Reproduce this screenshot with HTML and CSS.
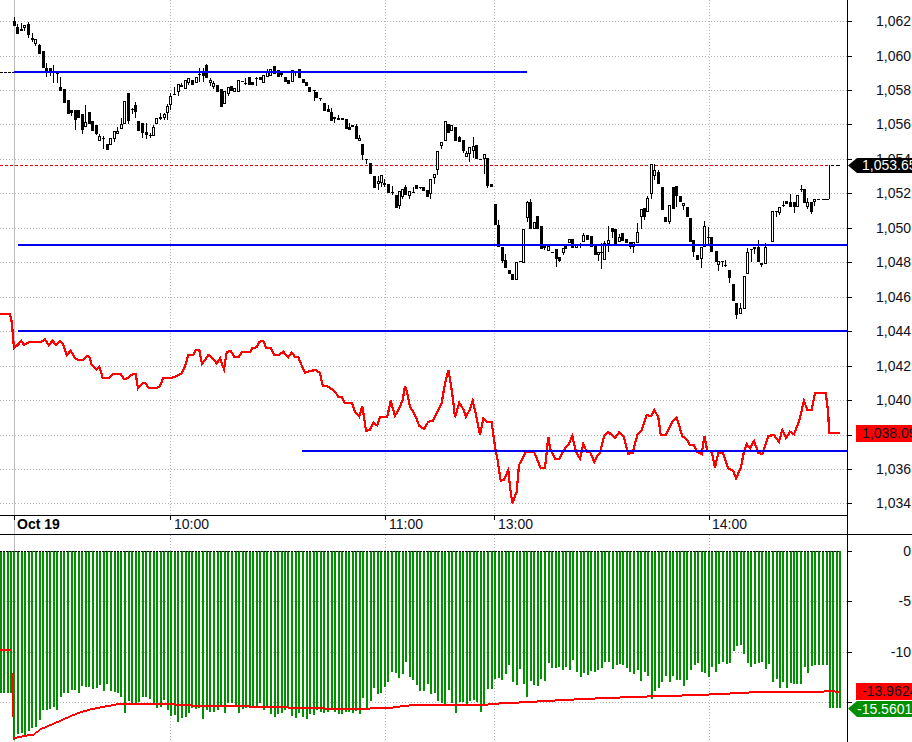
FILE: index.html
```html
<!DOCTYPE html>
<html lang="en">
<head>
<meta charset="utf-8">
<title>Oct 19 intraday chart</title>
<link rel="stylesheet" href="styles.css">
</head>
<body>
<svg class="chart" width="912" height="742" viewBox="0 0 912 742">
  <path id="grid" class="grid"></path>
  <line class="session" x1="14.5" y1="0" x2="14.5" y2="742"></line>
  <path id="lastDash" class="last-dash" d="M0 165.5H830"></path>
  <path class="black-dash" d="M0 72.5H14"></path>
  <path id="wicks" class="ink"></path>
  <path id="bodies" class="body-fill"></path>
  <path id="hollows" class="body-hollow"></path>
  <path class="ink" d="M829.5 165V199M817 199.5H820M822 199.5H829M831 165.5H834M836 165.5H840"></path>
  <polyline id="priceLine" class="red-line"></polyline>
  <path class="blue-line" d="M14 72H527M18 245H847M18 331H847M302 451H847"></path>
  <path id="bars" class="bars"></path>
  <path class="zero-line" d="M0 551.5H840"></path>
  <path class="red-dash" d="M0 650H11"></path>
  <path id="avgLine" class="red-fill"></path>

  <path class="frame" d="M0 515.5H847.5M0 534.5H912M847.5 0V742"></path>
  <path id="ticks" class="frame"></path>

  <g class="labels">
    <text class="date" x="17" y="529">Oct 19</text>
    <text x="174" y="529">10:00</text>
    <text x="389" y="529">11:00</text>
    <text x="498" y="529">13:00</text>
    <text x="712" y="529">14:00</text>
  </g>
  <g class="labels axis">
    <text x="911" y="26">1,062</text>
    <text x="911" y="61">1,060</text>
    <text x="911" y="95">1,058</text>
    <text x="911" y="129">1,056</text>
    <text x="911" y="164">1,054</text>
    <text x="911" y="198">1,052</text>
    <text x="911" y="233">1,050</text>
    <text x="911" y="267">1,048</text>
    <text x="911" y="302">1,046</text>
    <text x="911" y="336">1,044</text>
    <text x="911" y="371">1,042</text>
    <text x="911" y="405">1,040</text>
    <text x="911" y="474">1,036</text>
    <text x="911" y="508">1,034</text>
    <text x="911" y="556">0</text>
    <text x="911" y="606">-5</text>
    <text x="911" y="657">-10</text>
  </g>
  <polygon class="flag-black" points="848,165.5 857,158 912,158 912,173 857,173"></polygon>
  <rect class="flag-red" x="856" y="425" width="56" height="17"></rect>
  <rect class="flag-red" x="856" y="683" width="56" height="17"></rect>
  <polygon class="flag-green" points="848,708.5 857,701 912,701 912,717 857,717"></polygon>
  <g class="labels">
    <text class="on-dark" x="862" y="170">1,053.65</text>
    <text x="862" y="438">1,038.09</text>
    <text x="862" y="696">-13.9624</text>
    <text class="on-dark" x="857" y="714">-15.5601</text>
  </g>
</svg>
<script src="chart.js"></script>
</body>
</html>
```
FILE: styles.css
```css
html, body {
  margin: 0;
  padding: 0;
  background: #fff;
  overflow: hidden;
}
.chart {
  display: block;
  background: #fff;
}
.grid {
  fill: none;
  stroke: #b4b4b4;
  stroke-width: 1;
  stroke-dasharray: 1 2;
  shape-rendering: crispEdges;
}
.session {
  stroke: #bdbdbd;
  stroke-width: 1;
  shape-rendering: crispEdges;
}
.last-dash {
  fill: none;
  stroke: #e00010;
  stroke-width: 1;
  stroke-dasharray: 3 2;
  shape-rendering: crispEdges;
}
.black-dash {
  fill: none;
  stroke: #000;
  stroke-width: 1;
  stroke-dasharray: 3 1;
  shape-rendering: crispEdges;
}
.ink {
  fill: none;
  stroke: #000;
  stroke-width: 1;
  shape-rendering: crispEdges;
}
.body-fill {
  fill: #000;
  shape-rendering: crispEdges;
}
.body-hollow {
  fill: #fff;
  shape-rendering: crispEdges;
}
.red-line {
  fill: none;
  stroke: #ff0000;
  stroke-width: 2.2;
  stroke-linejoin: miter;
  shape-rendering: crispEdges;
}
.red-fill {
  fill: #ff0000;
  shape-rendering: crispEdges;
}
.red-dash {
  fill: none;
  stroke: #ff0000;
  stroke-width: 2;
  stroke-dasharray: 3 1;
  shape-rendering: crispEdges;
}
.blue-line {
  fill: none;
  stroke: #0000f0;
  stroke-width: 2;
  shape-rendering: crispEdges;
}
.bars {
  fill: #009000;
  shape-rendering: crispEdges;
}
.zero-line {
  fill: none;
  stroke: #000;
  stroke-width: 1;
  stroke-dasharray: 2 1;
  shape-rendering: crispEdges;
}
.frame {
  fill: none;
  stroke: #000;
  stroke-width: 1;
  shape-rendering: crispEdges;
}
.labels text {
  font-family: "Liberation Sans", Arial, sans-serif;
  font-size: 14px;
  fill: #101020;
}
.labels .date {
  font-weight: 700;
  fill: #000;
}
.axis text {
  text-anchor: end;
}
.labels .on-dark {
  fill: #fff;
}
.flag-black {
  fill: #000;
}
.flag-red {
  fill: #ff0000;
}
.flag-green {
  fill: #008f00;
}
```
FILE: chart.js
```js
// Candles: [x, bodyTop, bodyBottom, filled, high, low], measured at 3x from the window origin given per block.
var candleBlocks = [
  { ox: 0, oy: 0, rows: [
    [43,63,77,1,52,77],[52,81,102,1,72,102],[63,88,92,1,70,92],[73,76,83,0,76,92],[85,72,105,1,65,115],
    [97,115,120,1,100,125],[106,118,132,0,118,138],[118,135,161,1,132,161],[128,153,203,1,153,203],
    [139,204,212,1,190,230],[149,204,215,1,204,228],[160,217,220,1,195,248],[170,218,220,1,218,250],
    [181,262,272,1,232,272],[193,268,308,1,268,308],[203,300,342,1,300,342],[214,330,338,1,330,348],
    [224,330,360,1,330,390],[235,330,353,1,330,353],[245,343,390,1,343,402],[256,367,380,0,315,380],
    [266,337,372,1,337,372],[277,363,392,1,363,392],[289,375,402,1,375,406],[298,408,422,0,403,422],
    [310,413,415,1,408,448],[320,432,450,1,432,450],[331,413,434,0,413,434],[341,393,416,0,393,425],
    [352,393,401,0,382,401],[362,372,387,0,355,387],[373,303,373,0,303,373],[385,280,362,1,280,372],
    [395,327,329,1,323,342],[406,314,335,1,305,355],[415,363,392,1,363,392],[427,370,398,1,370,415],
    [437,396,405,1,368,416],[449,404,407,1,400,413],[460,382,407,0,376,407],[469,355,372,0,355,372],
    [480,352,356,1,340,360],[491,343,354,0,338,360],[502,319,339,0,312,360],[511,289,315,0,280,330],
    [522,282,285,1,262,285],[533,253,275,0,253,287],[544,255,260,1,250,260],[556,241,267,0,241,267],
    [565,235,248,0,235,255],[577,241,255,1,241,255],[587,232,250,0,232,250],[598,222,225,1,205,245],
    [608,218,228,1,205,245],[619,195,235,1,192,235],[629,240,250,0,235,258],[640,249,262,0,243,268],
    [652,255,275,1,255,275],[662,267,320,1,267,320],[673,273,311,0,273,311],[683,262,283,0,262,288],
    [694,258,272,1,258,272],[703,263,275,0,263,275],[715,240,275,0,240,275],[725,243,246,1,243,246],
    [736,249,252,1,235,255],[747,232,254,1,232,254],[757,246,255,1,246,255],[768,233,236,1,232,257],
    [779,231,241,1,231,241],[790,225,250,0,225,250],[800,215,232,0,208,232],[811,208,227,0,208,227],
    [823,198,222,1,198,222],[833,211,231,1,211,231],[844,218,226,0,218,232],[854,232,245,1,232,245],
    [865,241,251,1,241,251],[875,211,245,0,211,245],[886,212,215,1,212,228],[896,208,233,1,208,233]
  ]},
  { ox: 285, oy: 60, rows: [
    [53,57,68,1,57,68],[64,67,78,1,67,78],[73,80,97,1,80,97],[86,90,94,1,90,122],[94,97,113,1,97,113],[106,113,116,1,113,122]
  ]},
  { ox: 300, oy: 100, rows: [
    [72,10,33,1,10,33],[83,27,36,1,15,36],[92,37,62,1,25,62],[103,52,56,1,52,68],[115,55,59,1,45,59],
    [125,55,59,1,55,59],[137,57,86,1,57,86],[146,82,90,1,70,90],[157,75,80,1,75,80],[167,77,117,1,72,117],
    [178,114,122,0,105,122],[187,132,165,1,132,180],[199,178,180,1,178,192],[211,190,222,1,190,222],
    [221,228,264,1,228,264],[233,244,252,0,228,270],[242,225,248,0,225,260],[253,250,255,1,237,262],
    [263,252,279,1,252,279],[275,277,279,1,258,285],[287,285,324,1,285,324],[296,273,318,0,273,327],
    [307,268,291,0,268,296],[316,262,285,1,256,285],[328,274,288,0,274,297],[338,276,279,1,262,280],
    [349,256,266,1,256,266],[359,261,264,1,261,268],[370,261,272,1,261,272],[382,270,291,1,270,291],
    [391,238,282,0,238,297],[403,223,233,0,223,252],[412,154,209,0,154,225],[424,126,138,0,126,147],
    [434,64,124,0,64,124],[445,72,98,1,72,98],[454,76,93,0,76,93],[466,82,122,1,82,122],
    [478,112,127,1,107,127],[488,121,153,1,121,158],[499,160,172,0,153,172],[508,142,161,0,142,185],
    [520,139,153,0,112,173],[529,135,178,1,135,178],[541,176,181,0,176,181],[551,163,177,0,163,222],
    [562,175,259,1,175,264],[574,253,260,1,253,260],[584,313,374,1,313,374],[595,375,441,1,360,441],
    [605,442,484,1,442,488],[616,480,503,1,462,503],[626,511,522,1,511,522],[637,522,541,1,522,541],
    [649,487,539,0,487,539],[660,483,487,1,483,487],[670,388,490,0,388,490],[680,306,355,0,302,365],
    [691,306,388,1,297,388],[701,367,388,0,367,388],[712,349,388,1,349,388],[722,379,446,1,379,446],
    [733,438,444,1,438,450],[744,437,452,0,437,452],[755,455,458,1,455,458],[767,447,476,1,447,500],
    [776,472,483,1,472,487],[788,445,460,0,445,465],[796,438,448,1,438,448],[808,418,430,0,418,430],
    [817,418,443,1,418,443],[829,432,444,0,432,444],[840,432,437,1,428,443],[850,405,426,0,400,426],
    [862,405,420,1,405,420],[872,407,440,1,407,440],[884,437,466,1,437,466],[893,457,465,0,457,483]
  ]},
  { ox: 600, oy: 130, rows: [
    [3,367,370,1,340,418],[13,338,389,0,333,389],[24,331,343,0,288,365],[36,295,307,1,295,325],
    [46,298,345,1,298,345],[57,320,335,0,312,335],[67,310,333,1,310,333],[79,328,338,1,328,338],
    [89,335,350,1,335,356],[100,336,352,0,336,370],[112,305,340,0,278,340],[122,236,262,0,236,298],
    [133,235,262,1,235,270],[142,205,245,0,198,245],[154,103,193,0,103,207],[163,120,138,0,103,150],
    [175,125,162,1,120,162],[185,172,241,1,172,241],[196,260,277,1,260,277],[208,224,275,0,224,282],
    [218,172,237,1,172,237],[229,169,199,1,169,232],[239,199,217,1,199,217],[250,220,228,0,220,240],
    [260,231,262,1,231,262],[271,263,335,1,263,335],[280,331,366,1,331,380],[292,375,391,1,375,391],
    [303,352,386,0,352,413],[313,289,352,0,273,352],[325,320,325,1,290,345],[334,322,365,1,322,365],
    [347,364,395,1,364,395],[355,392,406,0,392,422],[366,394,397,1,392,412],[376,405,408,1,390,412],
    [388,421,443,1,421,460],[400,462,512,1,462,512],[409,518,555,1,518,566],[421,535,552,0,518,552],
    [431,439,536,0,439,536],[442,367,433,0,355,433],[452,357,360,1,357,395],[463,352,358,0,352,372],
    [475,350,396,1,330,396],[484,400,404,1,400,410],[496,352,403,0,340,403],[506,341,344,1,341,348],
    [517,244,335,0,244,335],[527,243,246,1,243,262],[538,232,250,0,232,255],[548,224,227,1,212,232],
    [559,214,222,1,214,222],[571,215,230,1,193,230],[581,215,230,1,215,248],[592,195,230,0,195,230],
    [602,176,180,1,166,185],[613,178,218,1,178,218],[622,217,230,0,203,238],[634,215,247,1,215,251],
    [643,208,215,0,208,228]
  ]}
];

var priceLine = [
  { ox: 0, oy: 300, pts: [0,42,30,42,36,70,38,100,42,145,55,133,63,122,72,135,88,126,122,126,135,118,146,135,158,122,168,135,180,122,190,135,200,165,212,152,225,175,235,180,248,180,262,167,268,170,275,195,290,208,298,200,308,233,328,233,340,222,362,222,373,238,385,233,398,222,407,222,414,265,425,252,435,248,447,264,470,264,480,258,490,234,515,234,535,226,545,220,555,200,565,165,580,165,588,150,598,150,606,192,615,180,625,165,635,172,650,190,660,175,672,208,680,157,692,152,703,170,717,170,725,156,750,156,757,145,770,142,778,125,790,122,798,143,812,143,822,165,835,165,850,155,865,172,875,158,885,170,895,172] },
  { ox: 300, oy: 360, pts: [0,5,15,38,30,33,48,30,60,40,68,77,85,80,105,95,115,110,125,110,135,130,155,128,165,155,178,170,187,138,198,212,210,210,220,188,232,197,240,172,262,170,272,122,285,168,300,140,308,120,315,78,322,100,330,140,345,165,358,198,372,207,385,185,398,183,410,160,425,128,435,70,445,30,452,70,460,125,465,172,478,128,490,148,498,170,510,148,518,122,528,165,540,225,550,175,560,185,575,187,585,260,592,295,602,362,612,360,625,330,630,380,637,430,650,395,657,315,678,275,702,275,722,325,735,325,745,230,750,265,765,296,778,296,795,265,805,255,817,228,828,275,840,296,850,252,860,275,870,275,883,307,893,285] },
  { ox: 600, oy: 380, pts: [0,220,12,168,25,156,45,174,58,156,72,172,85,222,98,218,112,165,125,150,140,105,153,108,163,90,175,112,182,165,198,165,215,128,230,113,247,168,262,180,270,195,282,195,292,215,305,222,313,168,322,213,335,215,345,262,355,220,368,217,385,265,400,272,408,295,422,265,432,215,440,192,450,205,462,183,475,218,487,222,505,168,522,165,537,185,547,150,558,174,570,155,582,163,597,125,612,62,622,90,635,90,645,38,677,38,685,100,687,158,720,158] }
];

// Slow average in the lower pane, drawn one stair-step pixel at a time.
var avgLine = [
  { ox: 0, oy: 490, pts: [40,745,50,742,100,733,120,718,180,692,230,670,270,658,300,652,355,642,500,642,600,648,800,650,898,654] },
  { ox: 300, oy: 600, pts: [0,323,120,327,200,327,225,323,275,323,310,318,350,314,560,314,565,312,627,309,700,305,755,302,810,299,873,296,930,293] },
  { ox: 612, oy: 490, pts: [0,624,45,621,160,618,258,615,342,611,396,608,470,605,632,605,645,602,680,606] }
];

var barBlocks = [
  { ox: 0, oy: 490, pts: [3,608,13,608,24,608,34,610,43,750,53,732,65,728,75,740,86,722,97,715,108,712,120,690,130,660,140,660,150,658,161,650,171,660,183,620,193,608,204,608,216,600,226,600,237,608,246,588,258,590,268,592,279,597,290,595,300,585,312,603,322,582,332,603,344,607,354,608,363,620,375,670,386,632,397,646,407,640,418,635,428,622,439,622,450,627,461,640,471,655,482,652,493,630,504,660,514,677,524,675,535,695,546,685,557,682,568,668,577,655,588,657,598,655,609,688,620,660,631,667,642,667,653,660,663,650,674,670,685,640,695,640,707,650,717,668,728,658,738,655,749,655,760,655,770,655,780,640,792,660,802,650,813,672,824,680,835,672,846,668,856,660,865,650,876,678,887,683,897,670] },
  { ox: 300, oy: 600, pts: [9,350,20,356,30,342,42,345,52,330,63,336,72,338,84,335,95,323,105,335,116,342,127,342,138,335,147,335,158,338,169,332,180,342,189,293,201,330,212,303,222,264,234,282,243,279,254,261,264,246,276,216,287,219,297,234,309,222,318,186,330,231,339,240,351,255,360,273,372,273,383,252,393,282,405,279,414,303,426,309,434,318,446,270,456,309,468,339,480,306,489,306,501,318,510,303,522,300,531,306,543,336,552,315,564,267,576,267,585,237,597,234,606,240,618,222,627,195,639,246,651,255,660,207,672,252,681,291,693,243,702,255,714,258,723,237,735,243,746,189,756,204,768,204,777,201,789,210,798,201,810,210,819,180,831,216,842,231,852,219,864,225,873,213,885,216,894,210,906,204,915,186,927,186] },
  { ox: 612, oy: 490, pts: [3,537,14,525,24,522,34,525,45,533,55,545,66,552,77,540,87,572,98,545,109,558,120,627,130,603,140,594,151,577,162,558,173,576,183,558,195,570,205,570,215,588,226,570,237,540,248,525,258,520,269,547,280,550,291,562,301,532,312,546,322,522,333,515,344,522,354,518,365,484,375,468,388,466,397,492,408,518,418,530,429,522,440,520,451,517,462,537,472,522,483,576,494,566,504,594,513,576,525,594,536,580,547,582,556,582,567,582,578,532,588,549,600,528,610,525,621,525,632,525,644,525,654,653,664,653,675,653,684,653] }
];

function px(v, origin) { return Math.round(v / 3 + origin); }
function rect(x, y, w, h) { return 'M' + x + ' ' + y + 'h' + w + 'v' + h + 'h' + (-w) + 'z'; }

function buildCandles() {
  var wicks = '', bodies = '', hollows = '';
  candleBlocks.forEach(function (b) {
    b.rows.forEach(function (r) {
      var x = px(r[0], b.ox), t = px(r[1], b.oy), bot = Math.max(px(r[2], b.oy), t + 1);
      wicks += 'M' + (x + 0.5) + ' ' + px(r[4], b.oy) + 'V' + px(r[5], b.oy);
      bodies += rect(x - 1, t, 3, bot - t);
      if (!r[3] && bot - t > 2) hollows += rect(x, t + 1, 1, bot - t - 2);
    });
  });
  document.getElementById('wicks').setAttribute('d', wicks);
  document.getElementById('bodies').setAttribute('d', bodies);
  document.getElementById('hollows').setAttribute('d', hollows);
}

function buildPriceLine() {
  var out = [];
  priceLine.forEach(function (b) {
    for (var i = 0; i < b.pts.length; i += 2) {
      out.push((b.pts[i] / 3 + b.ox).toFixed(1) + ',' + (b.pts[i + 1] / 3 + b.oy).toFixed(1));
    }
  });
  document.getElementById('priceLine').setAttribute('points', out.join(' '));
}

function buildAvgLine() {
  var real = [];
  avgLine.forEach(function (b) {
    for (var i = 0; i < b.pts.length; i += 2) {
      real.push([b.pts[i] / 3 + b.ox, b.pts[i + 1] / 3 + b.oy]);
    }
  });
  var d = rect(12, 673, 1, 44) + rect(13, 696, 1, 43);
  for (var s = 0; s + 1 < real.length; s++) {
    var a = real[s], c = real[s + 1];
    for (var x = Math.round(a[0]); x < Math.round(c[0]); x++) {
      var t = (x - a[0]) / (c[0] - a[0] || 1);
      var y = Math.round(a[1] + (c[1] - a[1]) * t);
      d += rect(x, y - 1, 1, 2);
    }
  }
  document.getElementById('avgLine').setAttribute('d', d);
}

function buildBars() {
  var d = '';
  barBlocks.forEach(function (b) {
    for (var i = 0; i < b.pts.length; i += 2) {
      var x = px(b.pts[i], b.ox), y = px(b.pts[i + 1], b.oy);
      d += rect(x - 1, 551, 2, y - 551);
    }
  });
  document.getElementById('bars').setAttribute('d', d);
}

function buildFrame() {
  var grid = '', ticks = '';
  [21, 56, 90, 124, 159, 193, 228, 262, 297, 331, 366, 400, 435, 469, 503, 601, 652, 702].forEach(function (y) {
    grid += 'M0 ' + (y + 0.5) + 'H847';
    ticks += 'M848 ' + (y + 0.5) + 'H852';
  });
  ticks += 'M848 551.5H852';
  [170, 385, 494, 709].forEach(function (x) {
    grid += 'M' + (x + 0.5) + ' 0V515M' + (x + 0.5) + ' 535V742';
    ticks += 'M' + (x + 0.5) + ' 515V520';
  });
  ticks += 'M14.5 515V520';
  document.getElementById('grid').setAttribute('d', grid);
  document.getElementById('ticks').setAttribute('d', ticks);
}

buildFrame();
buildCandles();
buildPriceLine();
buildAvgLine();
buildBars();
```
